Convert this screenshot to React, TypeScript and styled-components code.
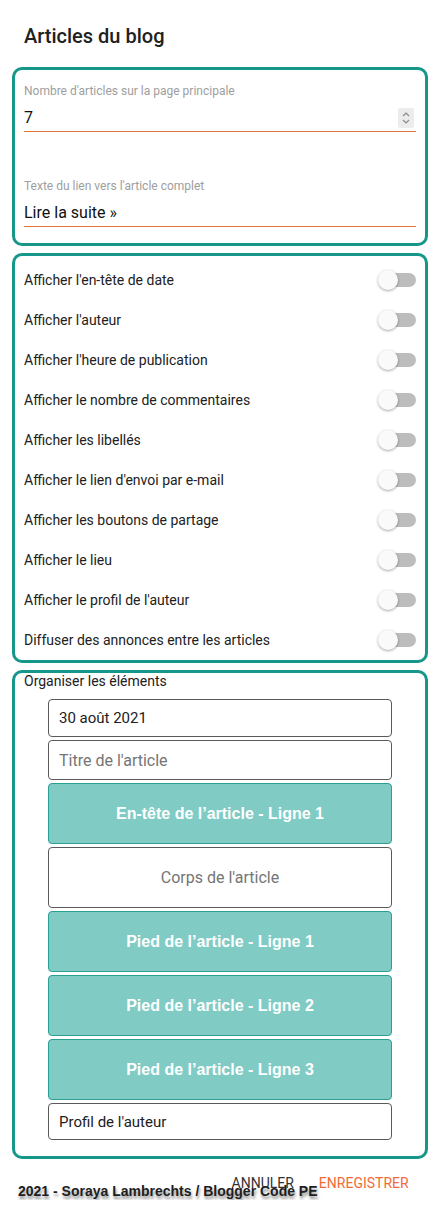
import React from 'react';
import styled, { createGlobalStyle } from 'styled-components';

const GlobalStyle = createGlobalStyle`
  html, body {
    margin: 0;
    padding: 0;
    background: #ffffff;
  }
  body {
    font-family: Roboto, 'Liberation Sans', Arial, sans-serif;
    color: #212121;
  }
`;

const Page = styled.div`
  width: 440px;
  box-sizing: border-box;
  padding: 24px 12px 0 12px;
`;

const Title = styled.h1`
  margin: 0 0 18px 12px;
  font-size: 20px;
  line-height: 25px;
  font-weight: 500;
  color: #212121;
`;

const Panel = styled.section<{ $pad: string }>`
  border: 3px solid #17968a;
  border-radius: 10px;
  padding: ${(p) => p.$pad};
  & + & {
    margin-top: 7px;
  }
`;

const Field = styled.div<{ $top?: number }>`
  margin-top: ${(p) => p.$top ?? 0}px;
`;

const FieldLabel = styled.div`
  font-size: 12px;
  line-height: 14px;
  color: #9e9e9e;
  margin-bottom: 6px;
`;

const InputRow = styled.div`
  height: 27px;
  display: flex;
  align-items: center;
  justify-content: space-between;
  border-bottom: 1px solid #e0773f;
  font-size: 16px;
  color: #111;
`;

const Spinner = styled.div`
  width: 16px;
  height: 20px;
  margin-right: 2px;
  background: #ececec;
  border-radius: 2px;
  display: flex;
  align-items: center;
  justify-content: center;
`;

const ToggleRow = styled.div`
  height: 40px;
  display: flex;
  align-items: center;
  justify-content: space-between;
  font-size: 14px;
  color: #212121;
`;

const Track = styled.div`
  position: relative;
  width: 36px;
  height: 14px;
  border-radius: 7px;
  background: #bdbdbd;
`;

const Thumb = styled.div`
  position: absolute;
  left: -2px;
  top: -3px;
  width: 20px;
  height: 20px;
  border-radius: 50%;
  background: #fafafa;
  box-shadow: 0 1px 3px rgba(0, 0, 0, 0.35);
`;

const SectionName = styled.div`
  font-size: 14px;
  line-height: 16px;
  color: #212121;
`;

const ItemList = styled.div`
  margin: 10px 24px 0 24px;
  display: flex;
  flex-direction: column;
  gap: 3px;
`;

type Kind = 'plain' | 'muted' | 'center' | 'teal';

const Item = styled.div<{ $h: number; $kind: Kind }>`
  height: ${(p) => p.$h}px;
  box-sizing: border-box;
  border-radius: 4px;
  display: flex;
  align-items: center;
  padding: 0 10px;
  border: 1px solid ${(p) => (p.$kind === 'teal' ? '#2a9f93' : '#5a5a5a')};
  background: ${(p) => (p.$kind === 'teal' ? '#80cbc4' : '#ffffff')};
  justify-content: ${(p) => (p.$kind === 'teal' || p.$kind === 'center' ? 'center' : 'flex-start')};
  font-family: ${(p) =>
    p.$kind === 'teal' ? "'Liberation Sans', Arial, sans-serif" : "Roboto, 'Liberation Sans', sans-serif"};
  font-weight: ${(p) => (p.$kind === 'teal' ? 700 : 400)};
  font-size: ${(p) => (p.$kind === 'plain' ? 15 : 16)}px;
  color: ${(p) => (p.$kind === 'teal' ? '#ffffff' : p.$kind === 'plain' ? '#212121' : '#757575')};
`;

const Footer = styled.footer`
  display: flex;
  align-items: flex-start;
  margin-top: 23px;
  padding-left: 6px;
`;

const Copyright = styled.span`
  font-family: 'Liberation Sans', Arial, sans-serif;
  font-weight: 700;
  font-size: 14px;
  line-height: 18px;
  color: #1e1e1e;
  text-shadow: 1px 3px 3px rgba(0, 0, 0, 0.45);
  white-space: nowrap;
`;

const Actions = styled.div`
  display: flex;
  gap: 25px;
  margin-left: -86px;
  margin-top: -7px;
`;

const ActionButton = styled.button<{ $primary?: boolean }>`
  border: none;
  background: transparent;
  padding: 0;
  font-family: Roboto, 'Liberation Sans', sans-serif;
  font-size: 14px;
  line-height: 16px;
  text-transform: uppercase;
  color: ${(p) => (p.$primary ? '#f26a3a' : '#333333')};
`;

const toggles = [
  "Afficher l'en-tête de date",
  "Afficher l'auteur",
  "Afficher l'heure de publication",
  'Afficher le nombre de commentaires',
  'Afficher les libellés',
  "Afficher le lien d'envoi par e-mail",
  'Afficher les boutons de partage',
  'Afficher le lieu',
  "Afficher le profil de l'auteur",
  'Diffuser des annonces entre les articles',
];

const items: { label: string; h: number; kind: Kind }[] = [
  { label: '30 août 2021', h: 38, kind: 'plain' },
  { label: "Titre de l'article", h: 40, kind: 'muted' },
  { label: 'En-tête de l’article - Ligne 1', h: 61, kind: 'teal' },
  { label: "Corps de l'article", h: 61, kind: 'center' },
  { label: 'Pied de l’article - Ligne 1', h: 61, kind: 'teal' },
  { label: 'Pied de l’article - Ligne 2', h: 61, kind: 'teal' },
  { label: 'Pied de l’article - Ligne 3', h: 61, kind: 'teal' },
  { label: "Profil de l'auteur", h: 37, kind: 'plain' },
];

const SpinIcon = () => (
  <svg width="10" height="16" viewBox="0 0 10 16" fill="none" stroke="#8a8a8a" strokeWidth="1.2">
    <path d="M2 6 L5 3 L8 6" />
    <path d="M2 10 L5 13 L8 10" />
  </svg>
);

export default function App() {
  return (
    <Page>
      <GlobalStyle />
      <Title>Articles du blog</Title>

      <Panel $pad="14px 9px 16px">
        <Field>
          <FieldLabel>Nombre d'articles sur la page principale</FieldLabel>
          <InputRow>
            <span>7</span>
            <Spinner>
              <SpinIcon />
            </Spinner>
          </InputRow>
        </Field>
        <Field $top={47}>
          <FieldLabel>Texte du lien vers l'article complet</FieldLabel>
          <InputRow>
            <span>Lire la suite »</span>
          </InputRow>
        </Field>
      </Panel>

      <Panel $pad="4px 9px 0">
        {toggles.map((t) => (
          <ToggleRow key={t}>
            <span>{t}</span>
            <Track>
              <Thumb />
            </Track>
          </ToggleRow>
        ))}
      </Panel>

      <Panel $pad="0 9px 16px">
        <SectionName>Organiser les éléments</SectionName>
        <ItemList>
          {items.map((it) => (
            <Item key={it.label} $h={it.h} $kind={it.kind}>
              {it.label}
            </Item>
          ))}
        </ItemList>
      </Panel>

      <Footer>
        <Copyright>2021 - Soraya Lambrechts / Blogger Code PE</Copyright>
        <Actions>
          <ActionButton>Annuler</ActionButton>
          <ActionButton $primary>Enregistrer</ActionButton>
        </Actions>
      </Footer>
    </Page>
  );
}
